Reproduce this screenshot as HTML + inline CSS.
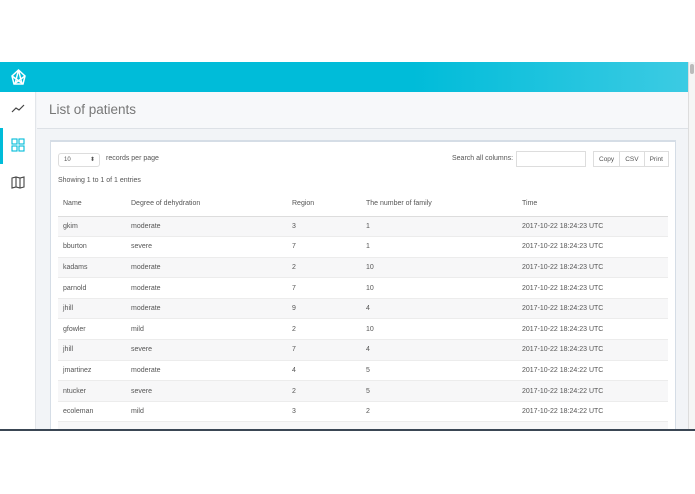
<!DOCTYPE html>
<html><head><style>
*{margin:0;padding:0;box-sizing:border-box}
body{width:695px;height:494px;background:#fff;font-family:"Liberation Sans",sans-serif;position:relative;overflow:hidden;color:#555}
.frame{position:absolute;left:0;top:62px;width:695px;height:369px;background:#f2f4f7;overflow:hidden;border-bottom:2px solid #3a4654}
.top{position:absolute;left:0;top:0;width:688px;height:30px;background:linear-gradient(90deg,#00bcd9 0%,#00bcd9 60%,#3ccbe3 100%)}
.side{position:absolute;left:0;top:30px;width:36px;height:340px;background:#fff;border-right:1px solid #e3e6ea}
.scroll{position:absolute;right:0;top:0;width:7px;height:369px;background:#f5f5f5;border-left:1px solid #ddd}
.scroll div{position:absolute;left:1px;top:2px;width:4px;height:10px;background:#bbb;border-radius:2px}
.titlebar{position:absolute;left:37px;top:30px;width:651px;height:37px;background:#f7f8fa;border-bottom:1px solid #dde1e6}
.titlebar h1{font-weight:normal;font-size:13.5px;color:#777;position:absolute;left:12px;top:10px}
.card{position:absolute;left:50px;top:78px;width:626px;height:300px;background:#fff;border:1px solid #d5dde6;border-top:2px solid #d5dde6}
.t{position:absolute;font-size:7px;color:#555;white-space:nowrap}
.sel{position:absolute;left:7px;top:11px;width:42px;height:14px;border:1px solid #ddd;border-radius:3px;font-size:6px;padding:3px 5px}
.search{position:absolute;left:465px;top:9px;width:70px;height:16px;border:1px solid #ddd}
.btns{position:absolute;left:542px;top:9px;height:16px;border:1px solid #ddd;display:flex}
.btns span{font-size:6.5px;padding:4px 5px;border-right:1px solid #ddd}
.btns span:last-child{border-right:none}
table{position:absolute;left:7px;top:50px;width:610px;border-collapse:collapse;font-size:7px;color:#555}
td{height:20.6px;padding:0 5px;border-top:1px solid #ececec}
tr.h td{height:24px;border-top:none;border-bottom:1px solid #ddd}
tr:nth-child(even) td{background:#f7f7f8}
</style></head><body>
<div class="frame">
<div class="top">
<svg style="position:absolute;left:10px;top:6px" width="17" height="18" viewBox="0 0 17 18" fill="none" stroke="#fff" stroke-width="1.5"><path d="M8.5 2L2 8 4 16 13 16 15 8Z"/><path d="M8.5 2L5 16M8.5 2L12 16M2 8L13 16M15 8L4 16"/></svg>
</div>
<div class="side">
<svg style="position:absolute;left:11px;top:12px" width="14" height="10" viewBox="0 0 14 10" fill="none" stroke="#444" stroke-width="1.2"><path d="M1 8L5 4 8 6 13 1"/></svg>
<div style="position:absolute;left:0;top:36px;width:3px;height:36px;background:#00bcd9"></div>
<svg style="position:absolute;left:11px;top:46px" width="14" height="14" viewBox="0 0 14 14" fill="none" stroke="#00bcd9" stroke-width="1.1"><rect x="1" y="1" width="5" height="5"/><rect x="8" y="1" width="5" height="5"/><rect x="1" y="8" width="5" height="5"/><rect x="8" y="8" width="5" height="5"/></svg>
<svg style="position:absolute;left:11px;top:84px" width="14" height="13" viewBox="0 0 14 13" fill="none" stroke="#444" stroke-width="1.1"><path d="M1 2L5 1 9 2 13 1 13 11 9 12 5 11 1 12Z M5 1V11 M9 2V12"/></svg>
</div>
<div class="titlebar"><h1>List of patients</h1></div>
<div class="card">
<div class="sel">10<span style="position:absolute;right:4px;top:2px">⬍</span></div>
<div class="t" style="left:55px;top:13px">records per page</div>
<div class="t" style="left:401px;top:13px">Search all columns:</div>
<div class="search"></div>
<div class="btns"><span>Copy</span><span>CSV</span><span>Print</span></div>
<div class="t" style="left:7px;top:35px">Showing 1 to 1 of 1 entries</div>
<table>
<colgroup><col style="width:68px"><col style="width:161px"><col style="width:74px"><col style="width:156px"><col></colgroup>
<tr class="h"><td>Name</td><td>Degree of dehydration</td><td>Region</td><td>The number of family</td><td>Time</td></tr>
<tr><td>gkim</td><td>moderate</td><td>3</td><td>1</td><td>2017-10-22 18:24:23 UTC</td></tr>
<tr><td>bburton</td><td>severe</td><td>7</td><td>1</td><td>2017-10-22 18:24:23 UTC</td></tr>
<tr><td>kadams</td><td>moderate</td><td>2</td><td>10</td><td>2017-10-22 18:24:23 UTC</td></tr>
<tr><td>parnold</td><td>moderate</td><td>7</td><td>10</td><td>2017-10-22 18:24:23 UTC</td></tr>
<tr><td>jhill</td><td>moderate</td><td>9</td><td>4</td><td>2017-10-22 18:24:23 UTC</td></tr>
<tr><td>gfowler</td><td>mild</td><td>2</td><td>10</td><td>2017-10-22 18:24:23 UTC</td></tr>
<tr><td>jhill</td><td>severe</td><td>7</td><td>4</td><td>2017-10-22 18:24:23 UTC</td></tr>
<tr><td>jmartinez</td><td>moderate</td><td>4</td><td>5</td><td>2017-10-22 18:24:22 UTC</td></tr>
<tr><td>ntucker</td><td>severe</td><td>2</td><td>5</td><td>2017-10-22 18:24:22 UTC</td></tr>
<tr><td>ecoleman</td><td>mild</td><td>3</td><td>2</td><td>2017-10-22 18:24:22 UTC</td></tr>
<tr><td>&nbsp;</td><td></td><td></td><td></td><td></td></tr>
</table>
</div>
<div class="scroll"><div></div></div>
</div>
</body></html>
